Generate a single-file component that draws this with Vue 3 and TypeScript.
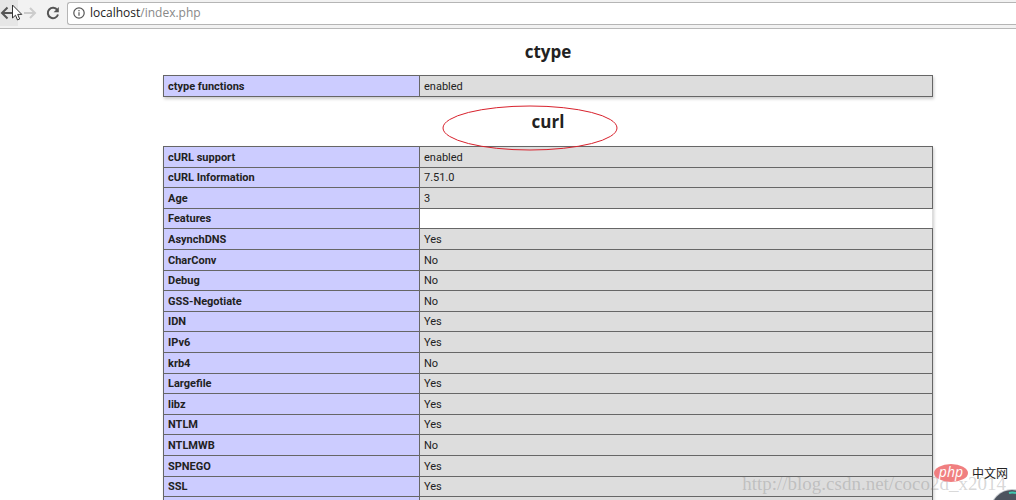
<script setup lang="ts">
import { ref } from 'vue'

interface Row {
  name: string
  value: string | null
}
interface Section {
  title: string
  circled: boolean
  rows: Row[]
}

const address = ref('localhost/index.php')

const sections: Section[] = [
  { title: 'ctype', circled: false, rows: [{ name: 'ctype functions', value: 'enabled' }] },
  {
    title: 'curl',
    circled: true,
    rows: [
      { name: 'cURL support', value: 'enabled' },
      { name: 'cURL Information', value: '7.51.0' },
      { name: 'Age', value: '3' },
      { name: 'Features', value: null },
      { name: 'AsynchDNS', value: 'Yes' },
      { name: 'CharConv', value: 'No' },
      { name: 'Debug', value: 'No' },
      { name: 'GSS-Negotiate', value: 'No' },
      { name: 'IDN', value: 'Yes' },
      { name: 'IPv6', value: 'Yes' },
      { name: 'krb4', value: 'No' },
      { name: 'Largefile', value: 'Yes' },
      { name: 'libz', value: 'Yes' },
      { name: 'NTLM', value: 'Yes' },
      { name: 'NTLMWB', value: 'No' },
      { name: 'SPNEGO', value: 'Yes' },
      { name: 'SSL', value: 'Yes' },
      { name: '', value: '' },
    ],
  },
]
</script>

<template>
  <div class="browser">
    <header class="toolbar">
      <button class="nav back" type="button" aria-label="Back">
        <svg width="14" height="14" viewBox="0 0 14 14"><path d="M14 7H2M7.500 1.500L2 7l5.500 5.500" /></svg>
      </button>
      <button class="nav forward" type="button" aria-label="Forward" disabled>
        <svg width="14" height="14" viewBox="0 0 14 14"><path d="M1 7h11M7 2l5 5-5 5" /></svg>
      </button>
      <button class="nav reload" type="button" aria-label="Reload">
        <svg width="14" height="14" viewBox="0 0 14 14">
          <path d="M11.300 4A5.200 5.200 0 1 0 12 8.500" />
          <path class="solid" d="M12.800 1v5.200H7.600z" />
        </svg>
      </button>
      <label class="omnibox">
        <svg class="info" width="12" height="12" viewBox="0 0 12 12">
          <circle cx="6" cy="6" r="5.200" />
          <path d="M6 5.200v3.600M6 2.900v1.300" />
        </svg>
        <span class="address">
          <span class="shown" aria-hidden="true">{{ address.split('/')[0] }}<span class="path">/{{ address.split('/').slice(1).join('/') }}</span></span>
          <input v-model="address" type="text" aria-label="Address" spellcheck="false" />
        </span>
      </label>
      <svg class="cursor" width="12" height="18" viewBox="0 0 12 18">
        <path d="M1.500 1v13l3-2.800 2 4.800 2.200-1-2-4.600h4.100z" />
      </svg>
    </header>

    <main class="info-page">
      <section v-for="section in sections" :key="section.title">
        <h2>
          {{ section.title }}
          <svg v-if="section.circled" class="ring" width="176" height="46" viewBox="0 0 176 46">
            <ellipse cx="88" cy="23" rx="87" ry="22" />
          </svg>
        </h2>
        <table>
          <tbody>
            <tr v-for="row in section.rows" :key="row.name">
              <th scope="row">{{ row.name }}</th>
              <td :class="{ empty: row.value === null }">{{ row.value }}</td>
            </tr>
          </tbody>
        </table>
      </section>
    </main>

    <div class="watermark">http://blog.csdn.net/coco2d_x2014</div>
    <div class="brand"><span class="oval">php</span><span class="site">中文网</span></div>
    <svg class="bubble" width="44" height="44" viewBox="0 0 44 44">
      <circle class="rim" cx="22" cy="22" r="22" />
      <circle class="core" cx="22" cy="22" r="21" />
      <path d="M19 4q3-1 7 0" />
    </svg>
  </div>
</template>

<style>
body {
  margin: 0;
  overflow: hidden;
  background: #fff;
}
</style>

<style scoped>
.browser {
  position: relative;
  height: 100vh;
  overflow: hidden;
  font-family: "Open Sans", "Noto Sans", "Noto Sans CJK SC", sans-serif;
  color: #222;
}
.toolbar {
  position: relative;
  display: flex;
  align-items: center;
  box-sizing: border-box;
  height: 29px;
  padding-bottom: 2px;
  background: #f2f2f2;
  border-bottom: 1px solid #b8b8b8;
}
.nav {
  display: flex;
  align-items: center;
  justify-content: center;
  flex: none;
  width: 22px;
  height: 26px;
  padding: 0;
  border: 0;
  background: none;
}
.nav svg {
  fill: none;
  stroke: #555;
  stroke-width: 2;
}
.back {
  width: 18px;
  background: #e6e6e6;
}
.back svg {
  margin-right: 4px;
}
.forward {
  width: 24px;
}
.forward svg {
  stroke: #ccc;
}
.reload .solid {
  fill: #555;
  stroke: none;
}
.omnibox {
  display: flex;
  align-items: center;
  gap: 5px;
  flex: 1;
  box-sizing: border-box;
  height: 23px;
  margin-left: 3px;
  padding-left: 5px;
  border: 1px solid #b5b5b5;
  border-right: 0;
  border-radius: 3px 0 0 3px;
  background: #fff;
}
.info {
  flex: none;
  fill: none;
  stroke: #555;
  stroke-width: 1.2;
}
.address {
  display: grid;
  flex: 1;
  font-size: 12px;
  line-height: 18px;
}
.shown,
.address input {
  grid-area: 1 / 1;
}
.path {
  color: #888;
}
.address input {
  min-width: 0;
  padding: 0;
  border: 0;
  outline: 0;
  background: none;
  font: inherit;
  color: transparent;
  caret-color: #222;
}
.cursor {
  position: absolute;
  left: 11px;
  top: 4px;
  fill: #fff;
  stroke: #333;
  stroke-width: 1;
}
.info-page {
  margin: 0 83px 0 163px;
}
h2 {
  position: relative;
  margin: 0;
  padding: 11px 0 12px;
  font-size: 17px;
  line-height: 23px;
  font-weight: 700;
  text-align: center;
}
section + section h2 {
  padding: 13px 0;
}
.ring {
  position: absolute;
  left: calc(50% - 106px);
  top: 8px;
  z-index: 1;
  fill: none;
  stroke: #d8212c;
  stroke-width: 1;
}
table {
  width: 100%;
  border-collapse: collapse;
  table-layout: fixed;
  box-shadow: 1px 2px 3px #ccc;
  font-family: Roboto, "Open Sans", sans-serif;
  font-size: 11px;
  line-height: 15px;
}
tr {
  height: 21px;
}
tr:nth-child(5n + 2),
tr:nth-child(5n + 4) {
  height: 20px;
}
th,
td {
  padding: 0 4px;
  border: 1px solid #666;
  text-align: left;
}
th {
  width: 247px;
  background: #ccf;
  font-weight: 700;
}
td {
  background: #ddd;
}
td.empty {
  background: #fff;
  border-right-color: #ddd;
}
.watermark {
  position: absolute;
  right: 10px;
  bottom: 6px;
  font-family: "Liberation Serif", serif;
  font-size: 19px;
  line-height: 20px;
  color: rgba(120, 120, 120, 0.3);
}
.brand {
  position: absolute;
  right: 8px;
  bottom: 18px;
  display: flex;
  align-items: center;
  gap: 4px;
}
.oval {
  width: 34px;
  height: 18px;
  border-radius: 50%;
  background: #f07f80;
  color: #fff;
  font-size: 14px;
  font-style: italic;
  line-height: 16px;
  text-align: center;
}
.site {
  font-family: "Noto Sans CJK SC", sans-serif;
  font-size: 12px;
  line-height: 18px;
}
.bubble {
  position: absolute;
  right: -18px;
  bottom: -33px;
}
.rim {
  fill: #c8ccd0;
}
.core {
  fill: #4d535e;
}
.bubble path {
  fill: none;
  stroke: #3fc9b0;
  stroke-width: 2;
}
</style>
